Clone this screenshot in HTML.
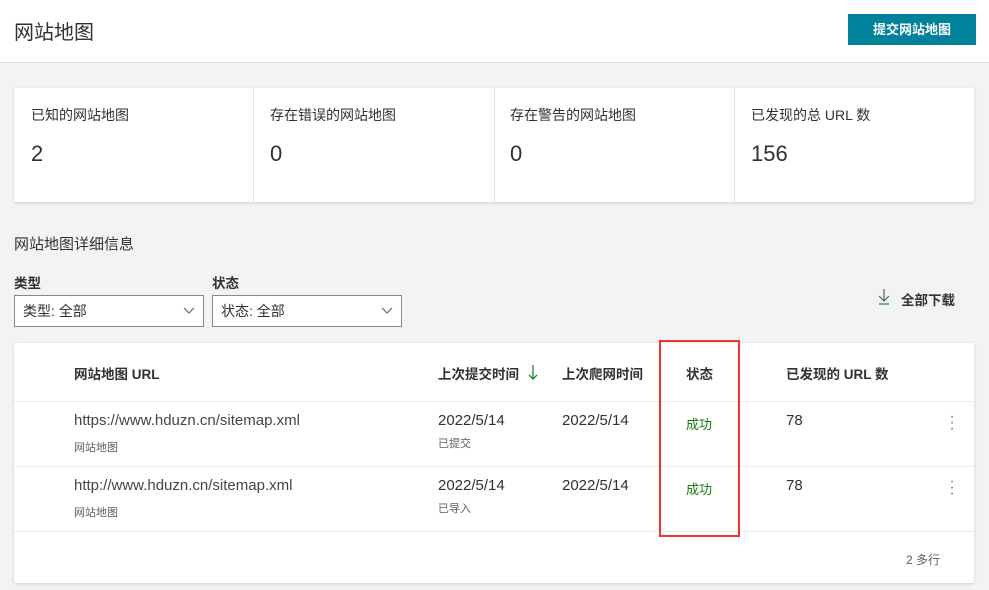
<!DOCTYPE html>
<html><head><meta charset="utf-8"><style>
*{margin:0;padding:0;box-sizing:border-box}
body{width:989px;height:590px;background:#f3f3f3;font-family:"Liberation Sans","Noto Sans CJK SC",sans-serif;color:#323130;position:relative;overflow:hidden}
.a{position:absolute;white-space:nowrap}
.hdr{position:absolute;left:0;top:0;width:989px;height:63px;background:#fff;border-bottom:1px solid #ddd}
.btn{position:absolute;left:848px;top:14px;width:128px;height:31px;background:#00829b;color:#fff;font-size:13px;font-weight:bold;text-align:center;line-height:31px}
.card{position:absolute;background:#fff;box-shadow:0 1px 3px rgba(0,0,0,.15);border-radius:2px}
.sel{position:absolute;height:32px;background:#fff;border:1px solid #8a8886;font-size:14px;line-height:30px;padding-left:8px;color:#323130}
.sel svg{position:absolute;right:8px;top:11px}
.hd{font-size:13.5px;font-weight:bold;color:#323130}
.line{position:absolute;left:14px;width:960px;height:1px;background:#edebe9}
.lb{font-size:14px}
.d{font-size:15px}
</style></head><body>
<div class="hdr"></div>
<div class="a" style="left:14px;top:16px;font-size:20px;color:#323130">网站地图</div>
<div class="btn">提交网站地图</div>

<div class="card" style="left:14px;top:88px;width:960px;height:114px"></div>
<div class="a" style="left:253px;top:88px;width:1px;height:114px;background:#e5e5e5"></div>
<div class="a" style="left:494px;top:88px;width:1px;height:114px;background:#e5e5e5"></div>
<div class="a" style="left:734px;top:88px;width:1px;height:114px;background:#e5e5e5"></div>
<div class="a lb" style="left:31px;top:105px">已知的网站地图</div>
<div class="a lb" style="left:270px;top:105px">存在错误的网站地图</div>
<div class="a lb" style="left:510px;top:105px">存在警告的网站地图</div>
<div class="a lb" style="left:751px;top:105px">已发现的总 URL 数</div>
<div class="a" style="left:31px;top:141px;font-size:22px">2</div>
<div class="a" style="left:270px;top:141px;font-size:22px">0</div>
<div class="a" style="left:510px;top:141px;font-size:22px">0</div>
<div class="a" style="left:751px;top:141px;font-size:22px">156</div>

<div class="a" style="left:14px;top:233px;font-size:15px">网站地图详细信息</div>
<div class="a hd" style="left:14px;top:272px">类型</div>
<div class="a hd" style="left:212px;top:272px">状态</div>
<div class="sel" style="left:14px;top:295px;width:190px">类型: 全部<svg width="12" height="8" viewBox="0 0 12 8"><path d="M1 1l5 5 5-5" fill="none" stroke="#605e5c" stroke-width="1"/></svg></div>
<div class="sel" style="left:212px;top:295px;width:190px">状态: 全部<svg width="12" height="8" viewBox="0 0 12 8"><path d="M1 1l5 5 5-5" fill="none" stroke="#605e5c" stroke-width="1"/></svg></div>
<svg class="a" style="left:877px;top:288px" width="14" height="18" viewBox="0 0 14 18"><path d="M7 1v12M2 8l5 5 5-5" fill="none" stroke="#555" stroke-width="1.1"/><path d="M2 16h10" stroke="#0078a8" stroke-width="1.2"/></svg>
<div class="a hd" style="left:901px;top:289px">全部下载</div>

<div class="card" style="left:14px;top:343px;width:960px;height:240px"></div>
<div class="line" style="top:401px"></div>
<div class="line" style="top:466px"></div>
<div class="line" style="top:531px"></div>
<div class="a hd" style="left:74px;top:363px">网站地图 URL</div>
<div class="a hd" style="left:438px;top:363px">上次提交时间</div>
<svg class="a" style="left:528px;top:364px" width="10" height="17" viewBox="0 0 10 17"><path d="M5 1v14M1 11l4 4 4-4" fill="none" stroke="#107c10" stroke-width="1.2"/></svg>
<div class="a hd" style="left:562px;top:363px">上次爬网时间</div>
<div class="a hd" style="left:686px;top:363px">状态</div>
<div class="a hd" style="left:786px;top:363px">已发现的 URL 数</div>

<div class="a d" style="left:74px;top:412px;color:#444">https://www.hduzn.cn/sitemap.xml</div>
<div class="a" style="left:74px;top:439px;font-size:11px;color:#605e5c">网站地图</div>
<div class="a d" style="left:438px;top:412px">2022/5/14</div>
<div class="a" style="left:438px;top:435px;font-size:11px;color:#605e5c">已提交</div>
<div class="a d" style="left:562px;top:412px">2022/5/14</div>
<div class="a" style="left:686px;top:414px;font-size:13px;color:#107c10">成功</div>
<div class="a d" style="left:786px;top:412px">78</div>
<div class="a" style="left:948px;top:414px;font-size:16px;color:#777;line-height:6px;width:8px;text-align:center">·<br>·<br>·</div>

<div class="a d" style="left:74px;top:477px;color:#444">http://www.hduzn.cn/sitemap.xml</div>
<div class="a" style="left:74px;top:504px;font-size:11px;color:#605e5c">网站地图</div>
<div class="a d" style="left:438px;top:477px">2022/5/14</div>
<div class="a" style="left:438px;top:500px;font-size:11px;color:#605e5c">已导入</div>
<div class="a d" style="left:562px;top:477px">2022/5/14</div>
<div class="a" style="left:686px;top:479px;font-size:13px;color:#107c10">成功</div>
<div class="a d" style="left:786px;top:477px">78</div>
<div class="a" style="left:948px;top:479px;font-size:16px;color:#777;line-height:6px;width:8px;text-align:center">·<br>·<br>·</div>

<div class="a" style="left:906px;top:551px;font-size:12px;color:#605e5c">2 多行</div>

<div class="a" style="left:659px;top:340px;width:81px;height:197px;border:2px solid #ee3333"></div>
</body></html>
